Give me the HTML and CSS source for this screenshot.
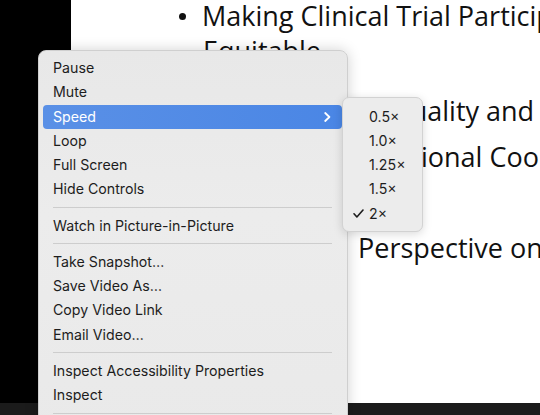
FILE: index.html
```html
<!DOCTYPE html>
<html>
<head>
<meta charset="utf-8">
<link rel="stylesheet" href="styles.css">
</head>
<body>
<div class="stage">
  <div class="strip"></div>
  <div class="slide">
    <div class="line l1"><span class="bullet"></span>Making Clinical Trial Participation More</div>
    <div class="line l2">Equitable</div>
    <div class="line l3"><span class="frag">-</span>Quality and Safety</div>
    <div class="line l4">ional Coordination</div>
    <div class="line l5">Perspective on</div>
  </div>
</div>
<div class="bottombar"></div>

<div class="menu">
  <div class="item">Pause</div>
  <div class="item">Mute</div>
  <div class="item active">Speed
    <svg class="chev" width="7" height="10" viewBox="0 0 7 10"><path d="M1.2 1 L5.4 5 L1.2 9" fill="none" stroke="#fff" stroke-width="1.8" stroke-linecap="round" stroke-linejoin="round"/></svg>
  </div>
  <div class="item">Loop</div>
  <div class="item">Full Screen</div>
  <div class="item">Hide Controls</div>
  <div class="sep"></div>
  <div class="item">Watch in Picture-in-Picture</div>
  <div class="sep"></div>
  <div class="item">Take Snapshot…</div>
  <div class="item">Save Video As…</div>
  <div class="item">Copy Video Link</div>
  <div class="item">Email Video…</div>
  <div class="sep"></div>
  <div class="item">Inspect Accessibility Properties</div>
  <div class="item">Inspect</div>
  <div class="sep"></div>
</div>

<div class="submenu">
  <div class="sitem"><span class="check"></span>0.5×</div>
  <div class="sitem"><span class="check"></span>1.0×</div>
  <div class="sitem"><span class="check"></span>1.25×</div>
  <div class="sitem"><span class="check"></span>1.5×</div>
  <div class="sitem"><span class="check"><svg width="11" height="9" viewBox="0 0 11 9"><path d="M1 4.8 L3.9 8 L10 1" fill="none" stroke="#1d1d1d" stroke-width="1.6" stroke-linecap="round" stroke-linejoin="round"/></svg></span>2×</div>
</div>
</body>
</html>
```

FILE: styles.css
```css
html, body {
  margin: 0;
  padding: 0;
  width: 540px;
  height: 415px;
  overflow: hidden;
  background: #1b1b1b;
}
.stage {
  display: flex;
  height: 403px;
}
.strip {
  width: 71px;
  background: #000;
}
.slide {
  flex: 1;
  background: #fff;
  font-family: "Open Sans", Lato, sans-serif;
  font-size: 27px;
  color: #111;
  overflow: hidden;
  white-space: nowrap;
}
.line {
  height: 34px;
  line-height: 34px;
}
.bullet {
  display: inline-block;
  width: 7px;
  height: 7px;
  border-radius: 50%;
  background: #111;
  margin: 0 16px 5px 0;
  vertical-align: middle;
}
.l1 { margin-top: -1px; padding-left: 108px; }
.l2 { margin-top: 1px; padding-left: 132px; }
.l3 { margin-top: 26px; padding-left: 280px; }
.l4 { margin-top: 12px; padding-left: 350px; }
.l5 { margin-top: 57px; padding-left: 287px; }
.frag { margin-right: 30px; }
.bottombar {
  height: 12px;
  background: #1b1b1b;
}
.menu {
  position: absolute;
  left: 38px;
  top: 50px;
  width: 308px;
  height: 400px;
  padding: 5px 0;
  background: linear-gradient(180deg, #e8e8e8 0%, #ececec 40%, #e9e9e9 100%);
  border: 1px solid #cfcfcf;
  border-radius: 8px;
  box-shadow: 0 0 14px rgba(0,0,0,0.18);
  font-family: Inter, "Liberation Sans", sans-serif;
  font-size: 14.2px;
  color: #1d1d1d;
}
.item {
  height: 24.25px;
  line-height: 24px;
  margin: 0 5px 0 4px;
  padding-left: 10px;
  border-radius: 4px;
  display: flex;
  align-items: center;
  justify-content: space-between;
}
.item.active {
  background: linear-gradient(90deg, #5a90e6 0%, #4a86e5 100%);
  color: #fff;
}
.chev {
  margin-right: 11px;
}
.sep {
  height: 12px;
  display: flex;
  align-items: center;
  margin: 0 15px 0 14px;
}
.sep::after {
  content: "";
  flex: 1;
  height: 1px;
  background: #cdcdcd;
}
.submenu {
  position: absolute;
  left: 342px;
  top: 97px;
  width: 79px;
  padding: 6px 0;
  background: #ececec;
  border: 1px solid #d2d2d2;
  border-radius: 7px;
  box-shadow: 0 2px 10px rgba(0,0,0,0.15);
  font-family: Inter, "Liberation Sans", sans-serif;
  font-size: 14.2px;
  color: #1d1d1d;
}
.sitem {
  height: 24.25px;
  display: flex;
  align-items: center;
}
.check {
  width: 26px;
  padding-left: 10px;
  box-sizing: border-box;
  display: flex;
  align-items: center;
}
```
